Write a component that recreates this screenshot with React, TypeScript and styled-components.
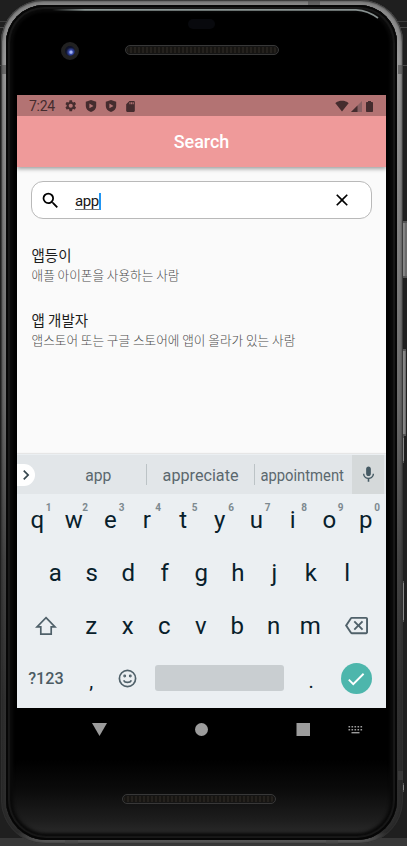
import React from "react";
import styled, { createGlobalStyle } from "styled-components";
import {
  MdSettings, MdSdCard, MdSignalWifi4Bar, MdSearch, MdClose,
  MdMic, MdOutlineBackspace, MdCheck, MdChevronRight,
} from "react-icons/md";

const Global = createGlobalStyle`
  * { box-sizing: border-box; }
  html, body { margin: 0; padding: 0; overflow: hidden; background: #1f1f1f; }
  body { font-family: Roboto, "Noto Sans CJK KR", sans-serif; }
  svg { display: block; flex: none; }
  button { border: 0; padding: 0; margin: 0; background: none; font: inherit; color: inherit; }
`;

const Desk = styled.main`
  position: relative;
  width: 407px;
  height: 846px;
  overflow: hidden;
  background:
    linear-gradient(#383838, #383838) 0 838px / 100% 8px no-repeat,
    linear-gradient(#3c3c3c, #3c3c3c) 0 21px / 100% 1px no-repeat,
    linear-gradient(#484848, #484848) 0 27px / 100% 1px no-repeat,
    linear-gradient(#4a4a4a, #4a4a4a) 0 65px / 100% 1px no-repeat,
    #1f1f1f;
`;

const Rim = styled.div`
  position: relative;
  width: 402px;
  height: 844px;
  margin-left: 1px;
  padding: 5px 6px 4px 5px;
  border-radius: 42px 42px 44px 44px;
  background: linear-gradient(#858585 0, #999 60px, #858585 200px, #6c6c6c 400px, #444 560px, #303030 700px, #2c2c2c 832px, #5a5a5a 841px);
  box-shadow: inset 0 0 0 1px rgba(50, 50, 50, 0.75), inset 0 0 2px 2px rgba(30, 30, 30, 0.35);
`;

const Glass = styled.div`
  position: relative;
  display: flex;
  flex-direction: column;
  align-items: center;
  height: 835px;
  border-radius: 38px 38px 40px 40px;
  background: linear-gradient(#000 755px, #0b0b0b 785px, #1d1d1d 815px, #2a2a2a 830px, #080808 832px);
  box-shadow: inset 0 0 0 2px #060606, inset 0 0 1px 4px #181818, inset 0 0 3px 7px #0a0a0a;
`;

const RimSeam = styled.i<{ $x: number; $y: number; $w: number; $h: number }>`
  position: absolute;
  left: ${(p) => p.$x}px;
  top: ${(p) => p.$y}px;
  width: ${(p) => p.$w}px;
  height: ${(p) => p.$h}px;
  background: rgba(70, 70, 70, 0.55);
`;

const SideButton = styled.i<{ $y: number; $h: number; $w?: number }>`
  position: absolute;
  left: 403px;
  top: ${(p) => p.$y}px;
  width: ${(p) => p.$w ?? 4}px;
  height: ${(p) => p.$h}px;
  border: solid #555;
  border-width: 2px 0;
  background: linear-gradient(90deg, #777, #999 1px, #6b6b6b 2px);
`;

const Glare = styled.svg`
  position: absolute;
  left: 0;
  top: 0;
`;

const TopBezel = styled.div`
  position: relative;
  width: 100%;
  height: 90px;
  flex: none;
  display: flex;
  flex-direction: column;
  align-items: center;
  padding-top: 14px;
`;

const Sensor = styled.div`
  width: 27px;
  height: 10px;
  border-radius: 5px;
  background: #08090d;
`;

const Camera = styled.div`
  position: absolute;
  left: 55px;
  top: 37px;
  width: 18px;
  height: 18px;
  border: 4px solid #212121;
  border-radius: 50%;
  background: radial-gradient(circle at 60% 62%, #a4b3f5 0 12%, #3548a8 26%, #11152f 55%, #080a12);
`;

const Speaker = styled.div<{ $top: number; $shift?: number }>`
  width: 154px;
  height: 10px;
  flex: none;
  margin-top: ${(p) => p.$top}px;
  margin-left: ${(p) => p.$shift ?? 0}px;
  border: 1px solid #383838;
  border-radius: 5px;
  background: repeating-linear-gradient(90deg, #24211d 0 2px, #171512 2px 4px);
  box-shadow: inset 0 0 0 1px #151515;
`;

const Screen = styled.section`
  width: 369px;
  height: 613px;
  flex: none;
  display: flex;
  flex-direction: column;
  background: #fafafa;
`;

const StatusBar = styled.div`
  height: 21px;
  flex: none;
  display: flex;
  align-items: center;
  padding: 1px 13px 0 12px;
  background: #b37373;
  color: #452c2e;
  font-size: 14px;
`;

const Clock = styled.span`
  width: 35px;
  letter-spacing: -0.3px;
`;

const StatusIcons = styled.span<{ $gap: number; $end?: boolean }>`
  display: flex;
  align-items: center;
  gap: ${(p) => p.$gap}px;
  margin-left: ${(p) => (p.$end ? "auto" : 0)};
`;

const AppBar = styled.header`
  position: relative;
  height: 51px;
  flex: none;
  display: grid;
  place-items: center;
  background: #ef9a9a;
  color: #fff;
  font-size: 17.9px;
  font-weight: 500;
  box-shadow: 0 2px 4px rgba(0, 0, 0, 0.36);
  clip-path: inset(0 0 -8px 0);
`;

const SearchBox = styled.div`
  height: 38px;
  flex: none;
  margin: 14px 14px 0;
  display: flex;
  align-items: center;
  padding: 0 19px 0 8px;
  border: 1px solid #b9b9b9;
  border-radius: 12px;
  background: #fff;
  color: #000;
`;

const Query = styled.span`
  flex: 1;
  display: flex;
  align-items: center;
  margin-left: 14px;
  font-size: 15px;
  line-height: 16px;
  color: #161616;
`;

const Typed = styled.span`
  border-bottom: 1px solid #777;
  line-height: 15px;
  height: 16px;
  margin-top: 4px;
  letter-spacing: -0.4px;
`;

const Caret = styled.i`
  width: 2px;
  height: 17px;
  margin-top: 2px;
  background: #2196f3;
`;

const Results = styled.ul`
  flex: 1;
  margin: 0;
  padding: 25px 14px 0 14.5px;
  list-style: none;
`;

const Result = styled.li`
  height: 65px;
`;

const ResultTitle = styled.div`
  font-family: "Noto Sans CJK KR", sans-serif;
  font-size: 14.5px;
  line-height: 22px;
  color: #1d1d1d;
`;

const ResultText = styled.div`
  font-family: "Noto Sans CJK KR", sans-serif;
  font-size: 12.65px;
  font-weight: 300;
  line-height: 18px;
  color: #4c4c4c;
`;

const Keyboard = styled.div`
  height: 254px;
  flex: none;
  padding-top: 1px;
  background: #ebeff2;
  box-shadow: 0 -1px 1px rgba(0, 0, 0, 0.08);
  clip-path: inset(-3px 0 0 0);
`;

const Suggestions = styled.div`
  height: 39px;
  display: flex;
  align-items: center;
  padding-right: 2px;
  background: #e2e6e9;
  color: #5b686e;
  font-size: 16px;
`;

const Expand = styled.button`
  width: 18px;
  height: 22px;
  display: flex;
  align-items: center;
  justify-content: center;
  border-radius: 0 11px 11px 0;
  background: #fff;
  color: #37474f;
`;

const Word = styled.span<{ $w: number; $squeeze?: number; $line?: boolean; $pad?: number }>`
  width: ${(p) => p.$w}px;
  height: 21px;
  display: flex;
  align-items: center;
  justify-content: center;
  padding-left: ${(p) => p.$pad ?? 0}px;
  padding-top: 2px;
  border-right: ${(p) => (p.$line ? "1px solid #bcc3c6" : "0")};
  & > span { transform: scaleX(${(p) => p.$squeeze ?? 1}); }
`;

const Voice = styled.button`
  width: 32px;
  height: 39px;
  margin-left: auto;
  display: grid;
  place-items: center;
  background: #d5d9da;
  color: #455a64;
`;

const Keys = styled.div`
  display: grid;
  grid-template-rows: 52px 53px 53px 53px;
`;

const KeyRow = styled.div<{ $inset?: number }>`
  display: flex;
  padding: 0 ${(p) => 2 + (p.$inset ?? 0)}px;
`;

const Key = styled.button<{ $w?: number }>`
  position: relative;
  width: ${(p) => p.$w ?? 36.5}px;
  flex: none;
  display: flex;
  align-items: center;
  justify-content: center;
  color: #08202b;
  font-size: 24px;
  line-height: 28px;
`;

const Hint = styled.sup`
  position: absolute;
  top: 8px;
  right: 4px;
  font-size: 10px;
  font-weight: 700;
  line-height: 11px;
  color: #7d898f;
`;

const ModeKey = styled(Key)`
  color: #4c5b63;
  font-size: 16.2px;
  font-weight: 500;
`;

const IconKey = styled(Key)`
  color: #50616a;
`;

const PunctKey = styled(Key)`
  padding-top: 4px;
  font-size: 20px;
`;

const Space = styled.button`
  width: 129px;
  height: 26px;
  margin: 13px 9px 0 9px;
  border-radius: 3px;
  background: #c9ced1;
`;

const Enter = styled.button`
  width: 31px;
  height: 31px;
  margin: 11px 0 0 11px;
  display: grid;
  place-items: center;
  border-radius: 50%;
  background: #4db6ac;
  color: #fff;
`;

const NavBar = styled.nav`
  width: 369px;
  height: 43px;
  flex: none;
  display: flex;
  align-items: center;
  padding-left: 75px;
  color: #9c9c9c;
`;

const NavItem = styled.span<{ $gap: number }>`
  margin-right: ${(p) => p.$gap}px;
`;

const Shield = () => (
  <svg width="12" height="12" viewBox="0 0 12 12">
    <path fillRule="evenodd" fill="currentColor" d="M6 0 11.2 1.8V6c0 2.8-2 5-5.2 6C2.8 11 .8 8.8.8 6V1.8ZM4.4 3.5v4.8L8.5 5.9Z" />
  </svg>
);

const Signal = () => (
  <svg width="11" height="11" viewBox="0 0 11 11">
    <path d="M0 11 11 0v11Z" fill="#896063" />
    <path d="M0 11 6.5 4.5V11Z" fill="#452c2e" />
  </svg>
);

const Battery = () => (
  <svg width="7" height="11" viewBox="0 0 7 11">
    <path d="M2 0h3v1h1.2q.8 0 .8.8v8.4q0 .8-.8.8H.8Q0 11 0 10.2V1.8Q0 1 .8 1H2Z" fill="currentColor" />
  </svg>
);

const Shift = () => (
  <svg width="22" height="20" viewBox="0 0 22 20" fill="none" stroke="currentColor" strokeWidth="1.7">
    <path d="M11 1.6 20 10.8h-3.8v7.4H5.8v-7.4H2Z" />
  </svg>
);

const Smile = () => (
  <svg width="19" height="19" viewBox="0 0 19 19" fill="none" stroke="currentColor" strokeWidth="1.7">
    <circle cx="9.5" cy="9.5" r="8.1" />
    <path d="M5.6 11.3c1.4 2.8 6.4 2.8 7.8 0" />
    <circle cx="6.7" cy="7" r=".6" />
    <circle cx="12.3" cy="7" r=".6" />
  </svg>
);

const KeyboardGlyph = () => (
  <svg width="15" height="10" viewBox="0 0 15 10" fill="currentColor">
    {[0, 3, 6, 9, 12].map((x) => (
      <React.Fragment key={x}>
        <rect x={x + 0.5} y="1" width="1.6" height="1.5" />
        <rect x={x + 0.5} y="4" width="1.6" height="1.5" />
      </React.Fragment>
    ))}
    <rect x="3.5" y="7" width="8" height="1.4" />
  </svg>
);

const results = [
  ["앱등이", "애플 아이폰을 사용하는 사람"],
  ["앱 개발자", "앱스토어 또는 구글 스토어에 앱이 올라가 있는 사람"],
];

export default function App() {
  return (
    <>
      <Global />
      <Desk>
        <SideButton $y={221} $h={57} />
        <SideButton $y={349} $h={87} $w={3} />
        <SideButton $y={436} $h={27} $w={1} />
        <SideButton $y={581} $h={41} $w={1} />
        <SideButton $y={783} $h={9} $w={1} />
        <Rim>
          <RimSeam $x={0} $y={65} $w={5} $h={9} />
          <RimSeam $x={397} $y={65} $w={5} $h={9} />
          <RimSeam $x={307} $y={0} $w={12} $h={5} />
          <RimSeam $x={64} $y={840} $w={13} $h={4} />
          <RimSeam $x={325} $y={840} $w={12} $h={4} />
          <RimSeam $x={397} $y={771} $w={5} $h={9} />
          <Glass>
            <Glare width="391" height="30" viewBox="0 0 391 30" fill="none">
              <defs>
                <linearGradient id="glare" x1="46" x2="376" y1="0" y2="0" gradientUnits="userSpaceOnUse">
                  <stop offset="0" stopColor="#8c9896" stopOpacity="0" />
                  <stop offset=".1" stopColor="#8c9896" />
                  <stop offset="1" stopColor="#87908f" />
                </linearGradient>
              </defs>
              <path d="M46 4.8H350Q362 5.5 372 13" stroke="url(#glare)" strokeWidth="1.7" />
            </Glare>
            <TopBezel>
              <Camera />
              <Sensor />
              <Speaker $top={16} $shift={1} />
            </TopBezel>
            <Screen>
              <StatusBar>
                <Clock>7:24</Clock>
                <StatusIcons $gap={7.5}>
                  <MdSettings size={13.5} />
                  <Shield />
                  <Shield />
                  <MdSdCard size={13} />
                </StatusIcons>
                <StatusIcons $gap={2} $end>
                  <MdSignalWifi4Bar size={14} />
                  <Signal />
                  <span />
                  <Battery />
                </StatusIcons>
              </StatusBar>
              <AppBar>Search</AppBar>
              <SearchBox>
                <MdSearch size={21} />
                <Query><Typed>app</Typed><Caret /></Query>
                <MdClose size={20} />
              </SearchBox>
              <Results>
                {results.map(([title, text]) => (
                  <Result key={title}>
                    <ResultTitle>{title}</ResultTitle>
                    <ResultText>{text}</ResultText>
                  </Result>
                ))}
              </Results>
              <Keyboard>
                <Suggestions>
                  <Expand><MdChevronRight size={20} /></Expand>
                  <Word $w={112} $pad={16} $squeeze={0.98} $line><span>app</span></Word>
                  <Word $w={108} $squeeze={1.01} $line><span>appreciate</span></Word>
                  <Word $w={95} $squeeze={0.925}><span>appointment</span></Word>
                  <Voice><MdMic size={19} /></Voice>
                </Suggestions>
                <Keys>
                  <KeyRow>
                    {[..."qwertyuiop"].map((c, i) => (
                      <Key key={c}>{c}<Hint>{(i + 1) % 10}</Hint></Key>
                    ))}
                  </KeyRow>
                  <KeyRow $inset={18}>
                    {[..."asdfghjkl"].map((c) => <Key key={c}>{c}</Key>)}
                  </KeyRow>
                  <KeyRow>
                    <IconKey $w={54}><Shift /></IconKey>
                    {[..."zxcvbnm"].map((c) => <Key key={c}>{c}</Key>)}
                    <IconKey $w={55}><MdOutlineBackspace size={23} /></IconKey>
                  </KeyRow>
                  <KeyRow>
                    <ModeKey $w={54}>?123</ModeKey>
                    <PunctKey>,</PunctKey>
                    <IconKey><Smile /></IconKey>
                    <Space aria-label="space" />
                    <PunctKey>.</PunctKey>
                    <Enter><MdCheck size={22} /></Enter>
                  </KeyRow>
                </Keys>
              </Keyboard>
            </Screen>
            <NavBar>
              <NavItem $gap={88}>
                <svg width="15" height="13" viewBox="0 0 15 13"><path d="M0 0h15L7.5 13Z" fill="currentColor" /></svg>
              </NavItem>
              <NavItem $gap={88}>
                <svg width="13" height="13" viewBox="0 0 13 13"><circle cx="6.5" cy="6.5" r="6.5" fill="currentColor" /></svg>
              </NavItem>
              <NavItem $gap={38}>
                <svg width="14" height="13" viewBox="0 0 14 13"><path d="M.5 0H14v13H.5Z" fill="currentColor" /></svg>
              </NavItem>
              <KeyboardGlyph />
            </NavBar>
            <Speaker $top={43} $shift={-5} />
          </Glass>
        </Rim>
      </Desk>
    </>
  );
}
